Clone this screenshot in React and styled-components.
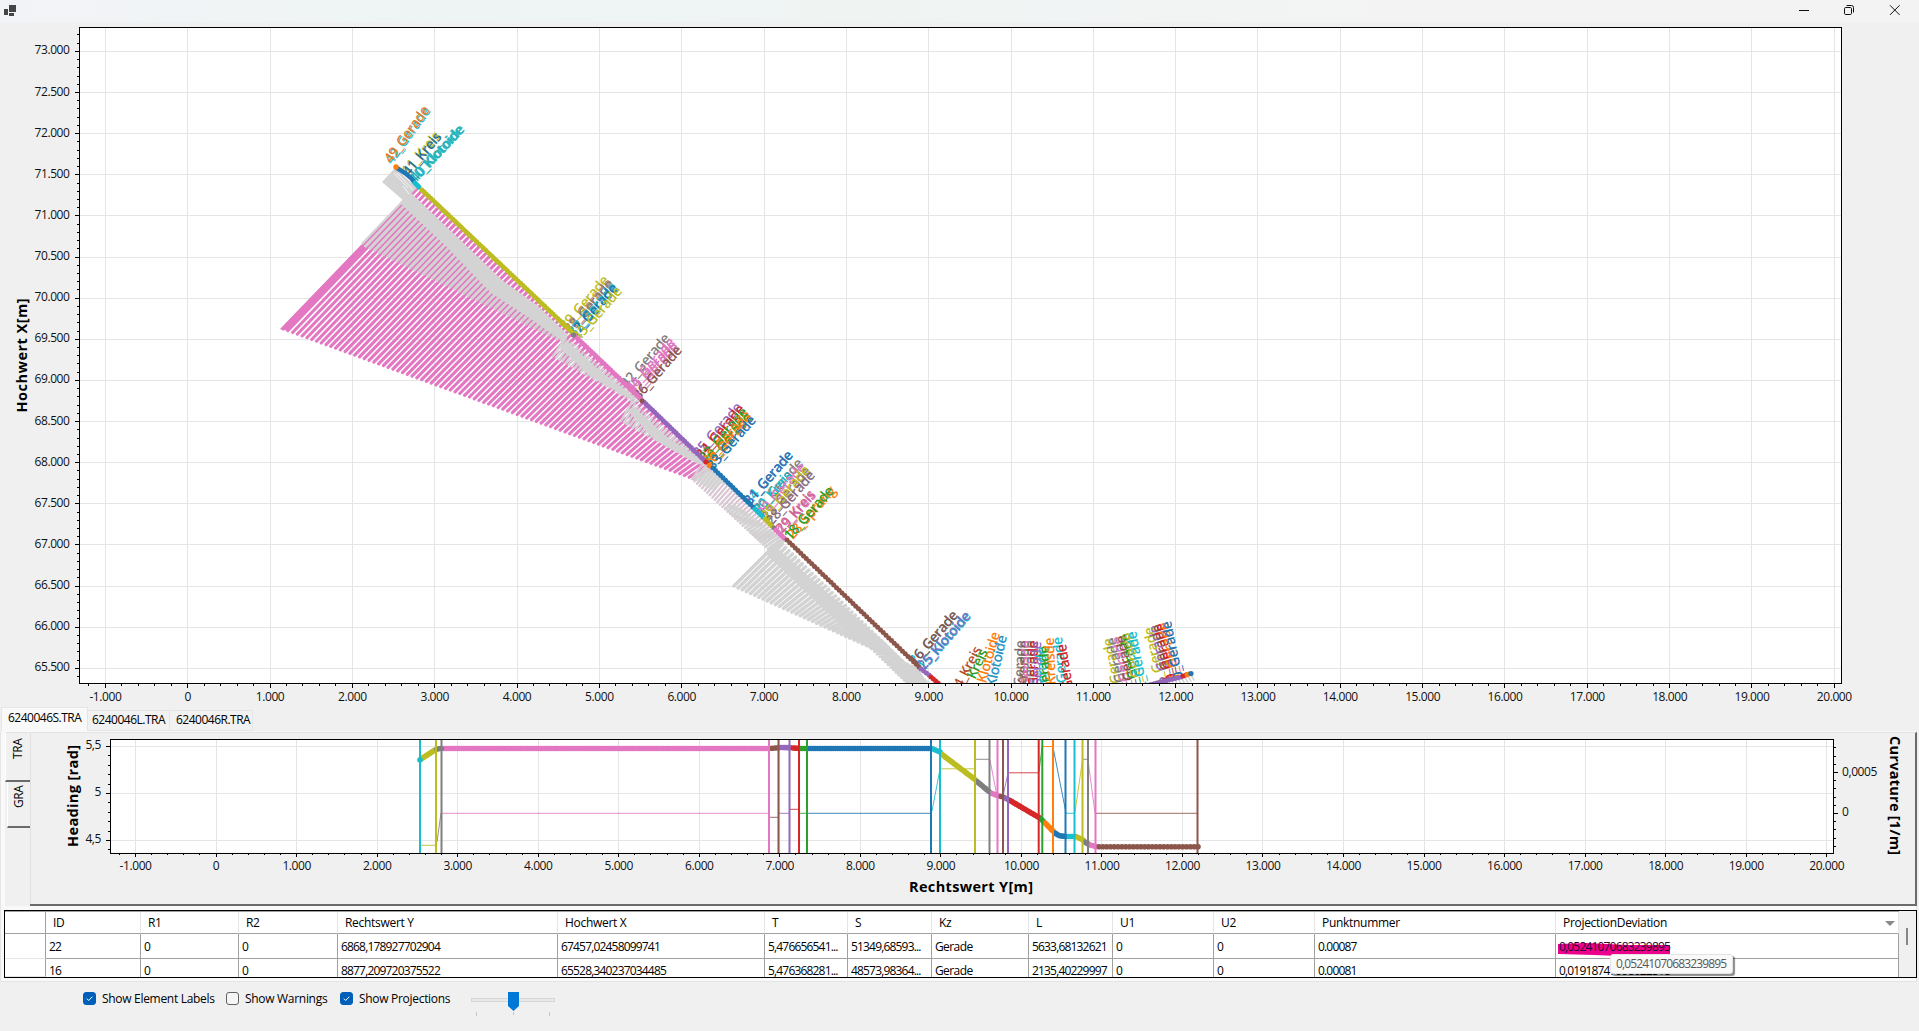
import React from "react";
import styled, { createGlobalStyle, css } from "styled-components";

const FONT = '"Open Sans", "Noto Sans", "Liberation Sans", sans-serif';

const C = {
  blue: "#1f77b4",
  orange: "#ff7f0e",
  green: "#2ca02c",
  red: "#d62728",
  purple: "#9467bd",
  brown: "#8c564b",
  pink: "#e377c2",
  gray: "#7f7f7f",
  olive: "#bcbd22",
  cyan: "#17becf",
  proj: "#d3d3d3",
};

const GlobalStyle = createGlobalStyle`
  *, *::before, *::after { box-sizing: border-box; }
  body { margin: 0; background: #f0f0f0; overflow: hidden; font-family: ${FONT}; }
`;

const Window = styled.div`
  width: 1919px;
  height: 1031px;
  display: flex;
  flex-direction: column;
  background: #f0f0f0;
  color: #000;
  font-family: ${FONT};
  font-size: 12px;
  letter-spacing: -0.4px;
  overflow: hidden;
`;

const TitleBar = styled.header`
  flex: none;
  height: 23px;
  display: flex;
  justify-content: space-between;
  background: linear-gradient(90deg, #f2f3f6 0, #eef4f4 420px, #eff4f3 900px, #f3f3f3 1400px);
`;

const Glyph = styled.svg`
  display: block;
  flex: none;
  shape-rendering: ${(p) => (p.$crisp ? "crispEdges" : "auto")};
`;

const ChartSvg = styled.svg`
  display: block;
  flex: none;
  overflow: hidden;
`;

const AxisText = styled.text`
  font-family: ${FONT};
  font-size: 12px;
  letter-spacing: -0.42px;
  fill: #111;
`;

const AxisTitle = styled.text`
  font-family: ${FONT};
  font-size: 14.5px;
  font-weight: 700;
  letter-spacing: 0;
  fill: #000;
  text-anchor: middle;
`;

const ElementLabel = styled.text`
  font-family: ${FONT};
  font-size: 14px;
  font-weight: 600;
  letter-spacing: -0.55px;
`;

const TabStrip = styled.nav`
  flex: none;
  height: 24px;
  display: flex;
  align-items: flex-end;
  padding-left: 1px;
`;

const Tab = styled.div`
  width: ${(p) => p.$w}px;
  height: ${(p) => (p.$active ? 24 : 21)}px;
  padding-left: ${(p) => p.$pad}px;
  line-height: ${(p) => (p.$active ? 19 : 18)}px;
  background: ${(p) => (p.$active ? "#f9f9f9" : "#f2f2f2")};
  border: 1px solid #e5e5e5;
  border-bottom: ${(p) => (p.$active ? "0" : "1px solid #e5e5e5")};
  border-left-width: ${(p) => (p.$active ? 1 : 0)}px;
  white-space: nowrap;
  letter-spacing: -0.5px;
`;

const TabPage = styled.section`
  flex: none;
  height: 251px;
  margin-right: 2px;
  padding: 1px 0 3px 4px;
  display: flex;
  flex-direction: column;
  background: #f9f9f9;
  border: 1px solid #e5e5e5;
  border-top: 0;
`;

const Inner = styled.div`
  flex: none;
  height: 174px;
  width: 1912px;
  display: flex;
  background: #f0f0f0;
`;

const SideTabs = styled.div`
  width: 25px;
  display: flex;
  flex-direction: column;
  align-items: flex-end;
`;

const SideTab = styled.div`
  width: ${(p) => (p.$active ? 25 : 23)}px;
  height: ${(p) => (p.$active ? 50 : 46)}px;
  padding-top: 2px;
  border-left: 1px solid #fff;
  border-top: ${(p) => (p.$active ? "1px solid #e3e3e3" : "0")};
  border-bottom: 2px solid #6b6b6b;
  display: flex;
  justify-content: center;
  span {
    writing-mode: vertical-rl;
    transform: rotate(180deg);
    height: 24px;
    line-height: ${(p) => (p.$active ? 20 : 18)}px;
    font-size: 12px;
  }
`;

const PlotPage = styled.div`
  flex: 1;
  border-top: 1px solid #e3e3e3;
  border-right: 2px solid #6b6b6b;
  border-bottom: 2px solid #6b6b6b;
  box-shadow: inset 1px 0 #e0e0e0;
  overflow: hidden;
`;

const GridBox = styled.div`
  flex: none;
  width: 1913px;
  height: 68px;
  margin: 4px 0 0 -1px;
  border: 1px solid #000;
  display: flex;
  position: relative;
`;

const Table = styled.div`
  flex: none;
  width: 1894px;
  background: #fff;
  border-top: 1px solid #a0a0a0;
  display: grid;
  grid-template-columns: 41px 95px 98px 99px 220px 207px 83px 84px 97px 84px 101px 101px 241px 343px;
  grid-template-rows: 22px 25px 18px;
  overflow: hidden;
`;

const Cell = styled.div`
  border-right: 1px solid #a0a0a0;
  border-bottom: 1px solid #a0a0a0;
  padding-left: 3px;
  line-height: 25px;
  letter-spacing: -0.82px;
  white-space: nowrap;
  overflow: hidden;
  position: relative;
  ${(p) => p.$last && css`border-bottom: 0; line-height: 24px;`}
  ${(p) =>
    p.$head &&
    css`
      border-right-color: #e5e5e5;
      padding-left: 7px;
      line-height: 21px;
      letter-spacing: -0.3px;
    `}
  ${(p) => p.$word && css`letter-spacing: -0.6px;`}
  ${(p) => p.$corner && css`border-right-color: #a0a0a0;`}
  ${(p) => p.$rowHead && css`border-bottom-color: #e5e5e5;`}
`;

const SortArrow = styled.i`
  position: absolute;
  right: 3px;
  top: 9px;
  border: 5px solid transparent;
  border-top-color: #8a8a8a;
  border-bottom: 0;
`;

const Marker = styled.span`
  position: relative;
  svg { position: absolute; left: -1px; top: 4px; z-index: 0; }
  b { position: relative; font-weight: 400; color: #2a0030; }
`;

const ScrollGutter = styled.div`
  flex: 1;
  background: #f0f0f0;
  padding: 17px 0 0 7px;
`;

const Thumb = styled.div`
  width: 2px;
  height: 17px;
  background: #868686;
`;

const Tip = styled.div`
  position: absolute;
  left: 1605px;
  top: 43px;
  width: 123px;
  height: 20px;
  padding-left: 5px;
  line-height: 17px;
  letter-spacing: -0.86px;
  background: #f9f9f9;
  border: 1px solid #e3e3e3;
  border-radius: 3px;
  box-shadow: 2px 2px 1px rgba(0, 0, 0, 0.45);
  color: #575757;
`;

const Footer = styled.footer`
  flex: 1;
  display: flex;
  align-items: flex-start;
  padding: 7px 0 0 83px;
`;

const Option = styled.label`
  width: ${(p) => p.$w}px;
  height: 18px;
  display: flex;
  align-items: center;
  gap: 6px;
  white-space: nowrap;
  letter-spacing: -0.3px;
`;

const Box = styled.span`
  flex: none;
  width: 13px;
  height: 13px;
  border-radius: 3px;
  border: 1px solid ${(p) => (p.$on ? "#005fb8" : "#626262")};
  background: ${(p) => (p.$on ? "#005fb8" : "#f5f5f5")};
  svg { display: block; }
`;

/* ---------- geometry helpers ---------- */

const mix = (p, q, t) => [p[0] + (q[0] - p[0]) * t, p[1] + (q[1] - p[1]) * t];

// A family of segments between edge a0-a1 and edge b0-b1.
function fan(a0, a1, b0, b1, n) {
  let d = "";
  for (let i = 0; i <= n; i++) {
    const a = mix(a0, a1, i / n);
    const b = mix(b0, b1, i / n);
    d += `M${a[0].toFixed(1)} ${a[1].toFixed(1)}L${b[0].toFixed(1)} ${b[1].toFixed(1)}`;
  }
  return d;
}

const Fan = ({ a, b, n, color = C.proj, w = 2 }) => (
  <path d={fan(a[0], a[1], b[0], b[1], n)} stroke={color} strokeWidth={w} strokeLinecap="round" fill="none" />
);

const Track = ({ pts, color, w = 5 }) => (
  <polyline points={pts.map((p) => p.join(",")).join(" ")} stroke={color} strokeWidth={w} fill="none" strokeLinecap="round" />
);

// Row of round survey points between two positions.
const Dots = ({ from, to, step = 3, color, r = 2.5 }) => {
  const n = Math.max(1, Math.round(Math.hypot(to[0] - from[0], to[1] - from[1]) / step));
  return (
    <g fill={color}>
      {Array.from({ length: n + 1 }, (_, i) => {
        const p = mix(from, to, i / n);
        return <circle key={i} cx={p[0]} cy={p[1]} r={r} />;
      })}
    </g>
  );
};

const Hatch = () => {
  const A = [[417, 189], [711, 468]];
  const B = [[283, 329], [694, 479]];
  const n = 86;
  const m = 46;
  let gray = "";
  for (let i = 0; i < m; i++) {
    const t = (i + 0.5) / n;
    const a = mix(A[0], A[1], t);
    const b = mix(B[0], B[1], t);
    const L = Math.hypot(b[0] - a[0], b[1] - a[1]);
    const s = i / m;
    const p = mix(a, b, (15 - 9 * s) / L);
    const q = mix(a, b, Math.min(1, (78 * (1 - s) + 9 * s) / L));
    gray += `M${p[0]} ${p[1]}L${q[0]} ${q[1]}`;
  }
  return (
    <g>
      <Fan a={A} b={B} n={n} color={C.pink} w={3.1} />
      <polygon points="361,245 368,248 288,331 280,329" fill={C.pink} />
      <path d={gray} stroke={C.proj} strokeWidth="3.1" />
      <path d="M404 200L362 244" stroke={C.proj} strokeWidth="2.5" />
    </g>
  );
};

const pad3 = (n) => {
  const s = String(Math.abs(n));
  return (n < 0 ? "-" : "") + (s.length > 3 ? s.slice(0, -3) + "." + s.slice(-3) : s);
};

const range = (a, b) => Array.from({ length: b - a + 1 }, (_, i) => a + i);

/* ---------- map view ---------- */

const PLAN_LABELS = [
  [392, 165, -54, "42_Gerade", C.cyan],
  [391, 164, -54, "49_Gerade", "#e0812f"],
  [408, 176, -50, "11_Kreis", C.olive],
  [409, 177, -50, "41_Kreis", "#2b6f96"],
  [415, 184, -47, "10_Klotoide", C.cyan],
  [416, 183, -47, "40_Klotoide", "#2fb0b4"],
  [566, 331, -49, "39_Gerade", C.olive],
  [570, 334, -49, "38_Gerade", "#c98a5c"],
  [571, 335, -49, "13_Gerade", C.gray],
  [574, 338, -49, "37_Gerade", C.cyan],
  [575, 339, -49, "12_Gerade", C.blue],
  [579, 342, -49, "43_Gerade", C.olive],
  [627, 389, -49, "42_Gerade", C.gray],
  [632, 393, -49, "41_Gerade", C.pink],
  [634, 396, -49, "39_Gerade", C.pink],
  [636, 398, -49, "37_Gerade", "#d679b9"],
  [639, 401, -49, "36_Gerade", C.brown],
  [699, 458, -49, "35_Gerade", C.purple],
  [702, 460, -49, "34_Gerade", C.red],
  [705, 463, -49, "33_Gerade", C.green],
  [708, 466, -49, "36_Gerade", C.orange],
  [709, 468, -49, "35_Gerade", C.green],
  [710, 469, -49, "30_Gerade", C.orange],
  [713, 471, -49, "33_Gerade", C.blue],
  [750, 506, -49, "24_Gerade", C.cyan],
  [750, 506, -49, "31_Gerade", "#3d6fb6"],
  [760, 514, -49, "21_Gerade", C.gray],
  [759, 515, -49, "30_Kreis", C.cyan],
  [763, 518, -49, "20_Gerade", C.pink],
  [768, 522, -49, "23_Gerade", "#8a6f7a"],
  [767, 521, -49, "29_Gerade", C.olive],
  [772, 526, -49, "28_Gerade", "#8d6c80"],
  [783, 535, -49, "19_Kreis", C.pink],
  [782, 534, -49, "29_Kreis", "#cf6690"],
  [793, 540, -48, "28_Sprung", C.orange],
  [790, 541, -48, "18_Gerade", C.green],
  [915, 666, -49, "26_Gerade", C.cyan],
  [915, 666, -49, "16_Gerade", C.brown],
  [924, 672, -49, "15_Klotoide", C.cyan],
  [924, 671, -49, "25_Klotoide", "#7274c4"],
];

// Labels whose start lies under the frame: placed by their end point.
const CUT_LABELS = [
  [982, 650, -62, "14_Kreis", "#b8502c"],
  [984, 652, -65, "Kreis", C.green, true],
  [1000, 634, -74, "13_Klotoide", C.orange],
  [1007, 637, -77, "12_Klotoide", "#2b94c4"],
  [1025, 641, -88, "5_Gerade", C.gray],
  [1029, 641, -88, "4_Kreisde", C.brown],
  [1032, 641, -88, "8_Gerade", C.pink],
  [1035, 641, -89, "9_Gerade", C.gray],
  [1038, 641, -90, "7_Gerade", C.red],
  [1041, 642, -91, "7_Gerade", C.purple],
  [1046, 647, -91, "11_Gerade", C.cyan],
  [1049, 646, -91, "6_Gerade", C.green],
  [1054, 638, -92, "5_Kreisde", C.orange],
  [1062, 637, -96, "5_Gerade", C.cyan],
  [1066, 644, -99, "4_Gerade", C.red],
  [1112, 638, -101, "3_Gerade", C.olive],
  [1116, 637, -101, "2_Gerade", C.gray],
  [1121, 636, -101, "3_Gerade", C.pink],
  [1125, 635, -101, "2_Gerade", C.brown],
  [1129, 633, -101, "4_Gerade", C.green],
  [1132, 632, -101, "3_Gerade", C.olive],
  [1136, 631, -101, "2_Gerade", C.cyan],
  [1153, 627, -102, "1_Gerade", C.olive],
  [1158, 625, -102, "2_Gerade", C.purple],
  [1161, 624, -102, "1_Gerade", C.brown],
  [1164, 623, -102, "0_Gerade", C.red],
  [1168, 622, -102, "1_Gerade", C.orange],
  [1171, 621, -102, "0_Gerade", C.blue],
];

const MapLabel = ({ x, y, a, end, color, children }) => (
  <ElementLabel transform={`translate(${x} ${y}) rotate(${a})`} textAnchor={end ? "end" : "start"} fill={color}>
    {children}
  </ElementLabel>
);

const MapChart = () => {
  const X = (k) => 187.7 + 82.33 * k;
  const Y = (i) => 51.4 + 41.13 * i;
  return (
    <ChartSvg width="1919" height="684" viewBox="0 23 1919 684">
      <defs>
        <clipPath id="mapArea">
          <rect x="80" y="28" width="1761" height="656" />
        </clipPath>
      </defs>
      <rect x="79.5" y="27.5" width="1762" height="657" fill="#fff" />
      <g stroke="#e5e5e5" shapeRendering="crispEdges">
        {range(-1, 20).map((k) => (
          <line key={k} x1={X(k)} x2={X(k)} y1="28" y2="684" />
        ))}
        {range(0, 15).map((i) => (
          <line key={i} x1="80" x2="1841" y1={Y(i)} y2={Y(i)} />
        ))}
      </g>
      <g clipPath="url(#mapArea)">
        <Hatch />
        {/* station near the start of the alignment */}
        <polygon points="382,182 395,168 417,188 404,201" fill={C.proj} />
        <path d="M394 173L408 188M397 173L413 190M403 186l6 8" stroke="#f6f6f6" strokeWidth="1" />
        <polygon points="401,204 411,193 454,234 503,281 538,306 568,335 562,341 528,317 491,293 446,246" fill={C.proj} />
        <Fan a={[[566, 338], [640, 400]]} b={[[553, 356], [634, 402]]} n={26} w={2.3} />
        <polygon points="558,346 568,342 600,371 636,398 630,399 590,376" fill={C.proj} />
        <Fan a={[[632, 402], [706, 463]]} b={[[621, 421], [698, 463]]} n={26} w={2.3} />
        <polygon points="627,410 634,407 668,438 700,459 692,461 655,440" fill={C.proj} />
        <Fan a={[[704, 462], [784, 538]]} b={[[692, 479], [768, 549]]} n={30} color="#d8c7d3" w={2.3} />
        <polygon points="692,479 706,465 724,482 712,490" fill={C.proj} opacity="0.8" />
        <Fan a={[[735, 505], [784, 541]]} b={[[725, 508], [770, 551]]} n={20} w={2.3} />
        <Fan a={[[779, 541], [925, 683]]} b={[[734, 586], [916, 668]]} n={44} w={3.5} />
        <polygon points="765,553 774,545 818,585 885,642 906,663 880,652 850,634" fill={C.proj} />
        <Fan a={[[866, 628], [940, 700]]} b={[[858, 636], [912, 688]]} n={20} w={2.6} />
        <polygon points="875,648 905,662 932,684 908,684" fill={C.proj} opacity="0.75" />
        <Fan a={[[1172, 681], [1191, 675]]} b={[[1176, 688], [1194, 680]]} n={6} w={1.5} />

        {PLAN_LABELS.map(([x, y, a, t, c], i) => (
          <MapLabel key={i} x={x} y={y} a={a} color={c}>{t}</MapLabel>
        ))}
        {CUT_LABELS.map(([x, y, a, t, c, flip], i) => (
          <MapLabel key={i} x={flip ? x + 4 : x} y={y} a={a} color={c} end>{t}</MapLabel>
        ))}

        <Track pts={[[397, 168], [405, 173], [411, 178], [414, 182]]} color={C.blue} w={4.5} />
        <Track pts={[[415, 183], [419, 187]]} color={C.cyan} />
        <circle cx="396" cy="167" r="2.7" fill={C.orange} />
        <Dots from={[422, 190]} to={[573, 333]} color={C.olive} />
        <Dots from={[576, 337]} to={[641, 399]} color={C.pink} />
        <circle cx="573.5" cy="335" r="2.6" fill={C.gray} />
        <Dots from={[644, 402]} to={[704, 460]} color={C.purple} />
        <circle cx="642" cy="401" r="2.4" fill={C.brown} />
        <circle cx="706" cy="462" r="2.6" fill={C.red} />
        <circle cx="709.5" cy="465.5" r="2.8" fill={C.orange} />
        <Dots from={[713, 468]} to={[753, 507]} color={C.blue} step={3.6} />
        <Dots from={[755, 509]} to={[763, 517]} color={C.cyan} />
        <Dots from={[765, 519]} to={[772, 526]} color={C.olive} />
        <circle cx="774" cy="528" r="2.4" fill={C.gray} />
        <Dots from={[776, 530]} to={[784, 538]} color={C.pink} />
        <Dots from={[787, 540]} to={[919, 667]} color={C.brown} step={3.8} />
        <Dots from={[921, 669]} to={[929, 675]} color={C.purple} />
        <Dots from={[931, 677]} to={[945, 689]} color={C.red} />
        <Dots from={[1145, 686]} to={[1181, 677]} color={C.purple} />
        <Dots from={[1183, 676]} to={[1186, 675]} color={C.red} />
        <Dots from={[1187, 674.5]} to={[1189, 674]} color={C.orange} />
        <circle cx="1191" cy="673.5" r="2.6" fill={C.blue} />
      </g>
      <g stroke="#000" shapeRendering="crispEdges">
        <rect x="79.5" y="27.5" width="1762" height="656" fill="none" />
        {range(-1, 20).map((k) => (
          <g key={k}>
            <line x1={X(k)} x2={X(k)} y1="684" y2="688" />
            {k < 20 && range(1, 4).map((m) => (
              <line key={m} x1={X(k + m / 5)} x2={X(k + m / 5)} y1="684" y2="686" />
            ))}
          </g>
        ))}
        <line x1={X(-1.2)} x2={X(-1.2)} y1="684" y2="686" />
        {range(0, 15).map((i) => (
          <g key={i}>
            <line x1="75" x2="80" y1={Y(i)} y2={Y(i)} />
            {range(1, 4).map((m) => i < 15 && <line key={m} x1="77" x2="80" y1={Y(i + m / 5)} y2={Y(i + m / 5)} />)}
          </g>
        ))}
        {[0.2, 0.4].map((m) => <line key={m} x1="77" x2="80" y1={Y(-m)} y2={Y(-m)} />)}
        {[15.2].map((m) => <line key={m} x1="77" x2="80" y1={Y(m)} y2={Y(m)} />)}
      </g>
      <rect x="79" y="684" width="1763" height="0.5" fill="#000" opacity="0" />
      {range(-1, 20).map((k) => (
        <AxisText key={k} x={X(k)} y="700.5" textAnchor="middle">{pad3(k * 1000)}</AxisText>
      ))}
      {range(0, 15).map((i) => (
        <AxisText key={i} x="69.5" y={Y(i) + 3} textAnchor="end">{pad3(73000 - i * 500)}</AxisText>
      ))}
      <AxisTitle transform="translate(26.5 355.5) rotate(-90)" textLength="114">Hochwert X[m]</AxisTitle>
    </ChartSvg>
  );
};

/* ---------- heading / curvature view ---------- */

const STATIONS = [
  [420, "cyan"], [436, "olive"], [441.5, "gray"], [769, "pink"], [778.5, "brown"], [789.5, "purple"],
  [799, "red"], [807, "green"], [931, "blue"], [940, "cyan"], [975, "olive"], [989.5, "gray"],
  [997.5, "pink"], [1003, "brown"], [1008, "purple"], [1038.7, "red"], [1042.3, "green"], [1053, "orange"],
  [1065.5, "blue"], [1074.5, "cyan"], [1082.5, "olive"], [1088, "gray"], [1095.5, "pink"], [1197.5, "brown"],
];

const CURVATURE = [
  [420, 845.3, 436, 845.3, "olive"], [437, 842, 441, 813, "gray"], [442, 813.3, 768, 813.3, "pink"],
  [769, 817.3, 778, 817.3, "brown"], [778, 813.3, 789, 813.3, "purple"], [790, 809.3, 799, 809.3, "red"],
  [799, 813.3, 807, 813.3, "green"], [807, 813.3, 931, 813.3, "blue"], [932, 811, 940, 769, "cyan"],
  [940, 768.8, 975, 768.8, "olive"], [976, 759.3, 990, 759.3, "gray"], [990, 760, 997, 796, "pink"],
  [1003, 796, 1008, 773, "purple"], [1008, 772.8, 1039, 772.8, "red"], [1039, 772, 1042, 747, "green"],
  [1042, 746.5, 1053, 746.5, "orange"], [1053, 747, 1066, 813, "blue"], [1066, 813.3, 1075, 813.3, "cyan"],
  [1075, 812, 1082.5, 760, "olive"], [1083, 759.3, 1088, 759.3, "gray"], [1088, 760, 1095, 813, "pink"],
  [1096, 813.3, 1197, 813.3, "brown"],
];

const HEADING = [
  ["olive", [421, 759], [435, 750]], ["gray", [437, 749], [441, 748.5]], ["pink", [444, 748.5], [769, 748.5]],
  ["brown", [772, 748.3], [778, 747.8]], ["purple", [780, 747.5], [790, 747.6]], ["red", [793, 748], [799, 748.4]],
  ["green", [802, 748.5], [807, 748.5]], ["blue", [809, 748.5], [931, 748.5]], ["cyan", [933, 749], [940, 752]],
  ["olive", [942, 754.5], [975, 779.5]], ["gray", [977, 781.5], [989, 791.5]], ["pink", [992, 793.5], [999, 796]],
  ["brown", [1001, 796.5], [1004, 797.5]], ["purple", [1006, 798.5], [1008, 799.5]], ["red", [1010, 800.5], [1039, 817.5]],
  ["green", [1041, 819], [1043, 821]], ["orange", [1045, 823], [1053, 831]], ["blue", [1055, 833], [1058, 835]],
  ["blue", [1060, 835.7], [1066, 836.5]], ["cyan", [1069, 836.5], [1075, 836.5]], ["olive", [1077, 837], [1083, 840]],
  ["gray", [1085, 842], [1088, 843.8]], ["pink", [1090, 845], [1096, 846.5]], ["brown", [1099, 846.8], [1198, 846.8]],
];

const ProfileChart = () => {
  const X = (k) => 216.1 + 80.53 * k;
  const Y = (v) => 793.5 - (v - 5) * 94;
  const K = (i) => 813.4 - i * 8.2;
  return (
    <ChartSvg width="1884" height="171" viewBox="30 733 1884 171">
      <defs>
        <clipPath id="profileArea">
          <rect x="111" y="740" width="1722" height="113" />
        </clipPath>
      </defs>
      <rect x="110.5" y="739.5" width="1723" height="113" fill="#fff" />
      <g stroke="#e5e5e5" shapeRendering="crispEdges">
        {range(-1, 20).map((k) => (
          <line key={k} x1={X(k)} x2={X(k)} y1="740" y2="853" />
        ))}
        {[5.5, 5, 4.5].map((v) => (
          <line key={v} x1="111" x2="1833" y1={Y(v)} y2={Y(v)} />
        ))}
      </g>
      <g clipPath="url(#profileArea)">
        {CURVATURE.map(([x1, y1, x2, y2, c], i) => (
          <line key={i} x1={x1} y1={y1} x2={x2} y2={y2} stroke={C[c]} strokeWidth="1" opacity="0.85" />
        ))}
        {HEADING.map(([c, a, b], i) => (
          <Dots key={i} from={a} to={b} color={C[c]} r={2.8} step={c === "brown" ? 3.8 : 2.2} />
        ))}
        {STATIONS.map(([x, c], i) => (
          <line key={i} x1={x} x2={x} y1="740" y2="853" stroke={C[c]} strokeWidth="2" />
        ))}
        <circle cx="420" cy="760" r="2.8" fill={C.cyan} />
        <circle cx="441.5" cy="748.5" r="2.6" fill={C.gray} />
      </g>
      <g stroke="#000" shapeRendering="crispEdges">
        <rect x="110.5" y="739.5" width="1723" height="113.5" fill="none" />
        {range(-1, 20).map((k) => (
          <g key={k}>
            <line x1={X(k)} x2={X(k)} y1="853" y2="857" />
            {k < 20 && range(1, 4).map((m) => (
              <line key={m} x1={X(k + m / 5)} x2={X(k + m / 5)} y1="853" y2="855" />
            ))}
          </g>
        ))}
        <line x1={X(-1.2)} x2={X(-1.2)} y1="853" y2="855" />
        {range(44, 55).map((v) => (
          <line key={v} x1={v % 5 === 0 ? 106 : 108} x2="111" y1={Y(v / 10)} y2={Y(v / 10)} />
        ))}
        {range(-4, 8).map((i) => (
          <line key={i} x1="1833" x2={i % 5 === 0 ? 1838 : 1836} y1={K(i)} y2={K(i)} />
        ))}
      </g>
      {range(-1, 20).map((k) => (
        <AxisText key={k} x={X(k)} y="869.5" textAnchor="middle">{pad3(k * 1000)}</AxisText>
      ))}
      {[["5,5", 5.5], ["5", 5], ["4,5", 4.5]].map(([t, v]) => (
        <AxisText key={t} x="101" y={Y(v) + 2.5} textAnchor="end">{t}</AxisText>
      ))}
      <AxisText x="1842" y="775.5">0,0005</AxisText>
      <AxisText x="1842" y="815.5">0</AxisText>
      <AxisTitle transform="translate(78 796) rotate(-90)" textLength="102">Heading [rad]</AxisTitle>
      <AxisTitle transform="translate(1889.5 795.5) rotate(90)" textLength="119">Curvature [1/m]</AxisTitle>
      <AxisTitle x="971" y="892" textLength="124">Rechtswert Y[m]</AxisTitle>
    </ChartSvg>
  );
};

/* ---------- table ---------- */

const HEADERS = ["ID", "R1", "R2", "Rechtswert Y", "Hochwert X", "T", "S", "Kz", "L", "U1", "U2", "Punktnummer", "ProjectionDeviation"];
const ROWS = [
  ["22", "0", "0", "6868,178927702904", "67457,02458099741", "5,476656541...", "51349,68593...", "Gerade", "5633,68132621", "0", "0", "0.00087", "0,05241070683239895"],
  ["16", "0", "0", "8877,209720375522", "65528,340237034485", "5,476368281...", "48573,98364...", "Gerade", "2135,40229997", "0", "0", "0.00081", "0,01918747998622518"],
];

const ElementTable = () => (
  <GridBox>
    <Table>
      <Cell $head $corner />
      {HEADERS.map((h) => (
        <Cell key={h} $head>
          {h}
          {h === "ProjectionDeviation" && <SortArrow />}
        </Cell>
      ))}
      {ROWS.map((row, r) => (
        <React.Fragment key={row[0]}>
          <Cell $rowHead />
          {row.map((v, i) => (
            <Cell key={i} $word={v === "Gerade"} $last={r === 1}>
              {i === 12 && r === 0 ? (
                <Marker>
                  <svg width="113" height="15" viewBox="0 0 113 15">
                    <path d="M0 2L28 1L70 3L112 3L112 14L100 13L82 13L60 14L36 13L0 12Z" fill="#ec008c" />
                  </svg>
                  <b>{v}</b>
                </Marker>
              ) : v}
            </Cell>
          ))}
        </React.Fragment>
      ))}
    </Table>
    <ScrollGutter><Thumb /></ScrollGutter>
    <Tip>0,05241070683239895</Tip>
  </GridBox>
);

const CheckOption = ({ w, on, children }) => (
  <Option $w={w}>
    <Box $on={on}>
      {on && (
        <svg width="11" height="11" viewBox="0 0 11 11">
          <path d="M2.8 5.6L4.7 7.5L8.3 3.7" fill="none" stroke="#fff" strokeWidth="1" />
        </svg>
      )}
    </Box>
    {children}
  </Option>
);

export default function App() {
  return (
    <Window>
      <GlobalStyle />
      <TitleBar>
        <Glyph $crisp width="20" height="23">
          <g fill="#454545">
            <rect x="4" y="9" width="4" height="6" />
            <rect x="9" y="5" width="7" height="7" />
            <rect x="9" y="13" width="5" height="3" />
          </g>
        </Glyph>
        <Glyph width="130" height="23" viewBox="1789 0 130 23">
          <g fill="none" stroke="#111" strokeWidth="1">
            <path d="M1799 10.5h10" />
            <rect x="1844.5" y="7.5" width="7" height="7" rx="1.2" />
            <path d="M1846.5 5.5h5a2 2 0 0 1 2 2v5" />
            <path d="M1890 5.3l9.6 9.6M1899.6 5.3l-9.6 9.6" />
          </g>
        </Glyph>
      </TitleBar>
      <MapChart />
      <TabStrip>
        <Tab $w={87} $pad={6} $active>6240046S.TRA</Tab>
        <Tab $w={82} $pad={4}>6240046L.TRA</Tab>
        <Tab $w={83} $pad={6}>6240046R.TRA</Tab>
      </TabStrip>
      <TabPage>
        <Inner>
          <SideTabs>
            <SideTab $active><span>TRA</span></SideTab>
            <SideTab><span>GRA</span></SideTab>
          </SideTabs>
          <PlotPage><ProfileChart /></PlotPage>
        </Inner>
        <ElementTable />
      </TabPage>
      <Footer>
        <CheckOption w={143} on>Show Element Labels</CheckOption>
        <CheckOption w={114}>Show Warnings</CheckOption>
        <CheckOption w={130} on>Show Projections</CheckOption>
        <Glyph width="88" height="30" viewBox="470 989 88 30">
          <rect x="471.5" y="998.5" width="83" height="3" fill="#e7eaea" stroke="#d6d6d6" />
          <path d="M508 992h11v14l-5.5 5l-5.5-5z" fill="#0078d7" />
          <path d="M476.5 1012v4M513.5 1012v3M549.5 1012v4" stroke="#c4c4c4" />
        </Glyph>
      </Footer>
    </Window>
  );
}
